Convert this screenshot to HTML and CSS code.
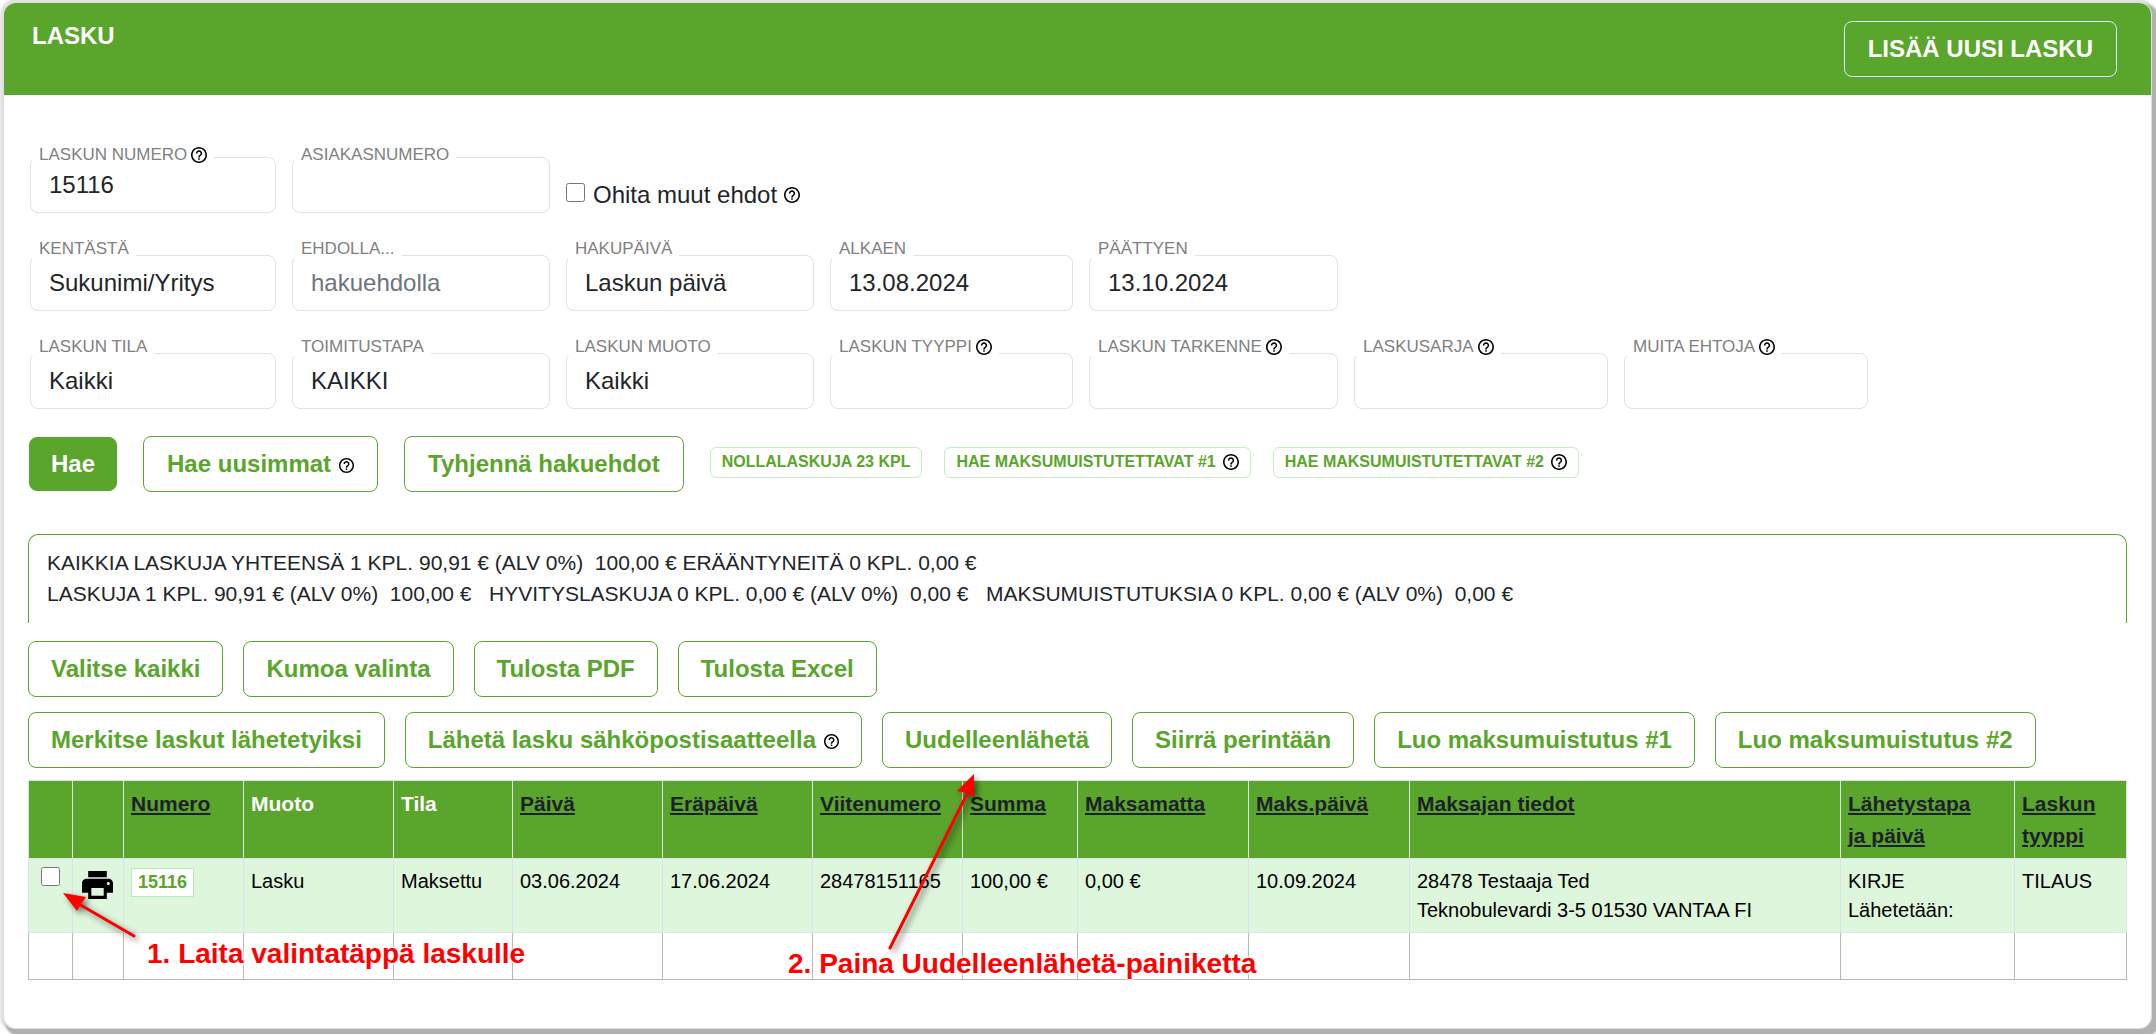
FILE: index.html
```html
<!DOCTYPE html>
<html lang="fi">
<head>
<meta charset="utf-8">
<meta name="viewport" content="width=device-width, initial-scale=1">
<title>Lasku</title>
<link rel="stylesheet" href="styles.css">
</head>
<body>
<svg class="sprite" aria-hidden="true">
  <symbol id="help" viewBox="2 2 20 20"><path d="M11 18h2v-2h-2v2zm1-16C6.480 2 2 6.480 2 12s4.480 10 10 10 10-4.480 10-10S17.520 2 12 2zm0 18c-4.410 0-8-3.590-8-8s3.590-8 8-8 8 3.590 8 8-3.590 8-8 8zm0-14c-2.210 0-4 1.790-4 4h2c0-1.100.9-2 2-2s2 .9 2 2c0 2-3 1.750-3 5h2c0-2.250 3-2.500 3-5 0-2.210-1.790-4-4-4z"/></symbol>
  <symbol id="print" viewBox="2 3 20 18"><path d="M19 8H5c-1.660 0-3 1.340-3 3v6h4v4h12v-4h4v-6c0-1.660-1.340-3-3-3zm-3 11H8v-5h8v5zm3-7c-.55 0-1-.45-1-1s.45-1 1-1 1 .45 1 1-.45 1-1 1zm-1-9H6v4h12V3z"/></symbol>
</svg>
<main class="card">
  <header class="card-header">
    <h1>LASKU</h1>
    <button type="button" class="btn btn-light">LISÄÄ UUSI LASKU</button>
  </header>
  <div class="card-body">
    <form class="search">
      <div class="fields fields-top">
        <div class="field"><label for="numero">LASKUN NUMERO <svg class="help"><use href="#help"/></svg></label><input id="numero" type="text" value="15116"></div>
        <div class="field"><label for="asiakas">ASIAKASNUMERO</label><input id="asiakas" type="text"></div>
        <div class="check"><input id="ohita" type="checkbox"><label for="ohita">Ohita muut ehdot <svg class="help"><use href="#help"/></svg></label></div>
      </div>
      <div class="fields">
        <div class="field"><label for="kentasta">KENTÄSTÄ</label><select id="kentasta"><option>Sukunimi/Yritys</option></select></div>
        <div class="field"><label for="ehdolla">EHDOLLA...</label><input id="ehdolla" type="text" placeholder="hakuehdolla"></div>
        <div class="field"><label for="hakupaiva">HAKUPÄIVÄ</label><select id="hakupaiva"><option>Laskun päivä</option></select></div>
        <div class="field"><label for="alkaen">ALKAEN</label><input id="alkaen" type="text" value="13.08.2024"></div>
        <div class="field"><label for="paattyen">PÄÄTTYEN</label><input id="paattyen" type="text" value="13.10.2024"></div>
      </div>
      <div class="fields">
        <div class="field"><label for="tila">LASKUN TILA</label><select id="tila"><option>Kaikki</option></select></div>
        <div class="field"><label for="toimitus">TOIMITUSTAPA</label><select id="toimitus"><option>KAIKKI</option></select></div>
        <div class="field"><label for="muoto">LASKUN MUOTO</label><select id="muoto"><option>Kaikki</option></select></div>
        <div class="field"><label for="tyyppi">LASKUN TYYPPI <svg class="help"><use href="#help"/></svg></label><select id="tyyppi"><option></option></select></div>
        <div class="field"><label for="tarkenne">LASKUN TARKENNE <svg class="help"><use href="#help"/></svg></label><select id="tarkenne"><option></option></select></div>
        <div class="field"><label for="sarja">LASKUSARJA <svg class="help"><use href="#help"/></svg></label><select id="sarja"><option></option></select></div>
        <div class="field"><label for="muita">MUITA EHTOJA <svg class="help"><use href="#help"/></svg></label><select id="muita"><option></option></select></div>
      </div>
      <div class="actions">
        <button type="button" class="btn btn-primary">Hae</button>
        <button type="button" class="btn">Hae uusimmat <svg class="help"><use href="#help"/></svg></button>
        <button type="button" class="btn">Tyhjennä hakuehdot</button>
        <div class="quick">
          <button type="button" class="btn-small">NOLLALASKUJA 23 KPL</button>
          <button type="button" class="btn-small">HAE MAKSUMUISTUTETTAVAT #1 <svg class="help"><use href="#help"/></svg></button>
          <button type="button" class="btn-small">HAE MAKSUMUISTUTETTAVAT #2 <svg class="help"><use href="#help"/></svg></button>
        </div>
      </div>
    </form>

    <section class="summary">
      <p>KAIKKIA LASKUJA YHTEENSÄ 1 KPL. 90,91 € (ALV 0%)&nbsp; 100,00 € ERÄÄNTYNEITÄ 0 KPL. 0,00 €</p>
      <p>LASKUJA 1 KPL. 90,91 € (ALV 0%)&nbsp; 100,00 €&nbsp;&nbsp; HYVITYSLASKUJA 0 KPL. 0,00 € (ALV 0%)&nbsp; 0,00 €&nbsp;&nbsp; MAKSUMUISTUTUKSIA 0 KPL. 0,00 € (ALV 0%)&nbsp; 0,00 €</p>
    </section>

    <div class="toolbar">
      <button type="button" class="btn">Valitse kaikki</button>
      <button type="button" class="btn">Kumoa valinta</button>
      <button type="button" class="btn">Tulosta PDF</button>
      <button type="button" class="btn">Tulosta Excel</button>
    </div>
    <div class="toolbar">
      <button type="button" class="btn">Merkitse laskut lähetetyiksi</button>
      <button type="button" class="btn">Lähetä lasku sähköpostisaatteella <svg class="help"><use href="#help"/></svg></button>
      <button type="button" class="btn">Uudelleenlähetä</button>
      <button type="button" class="btn">Siirrä perintään</button>
      <button type="button" class="btn">Luo maksumuistutus #1</button>
      <button type="button" class="btn">Luo maksumuistutus #2</button>
    </div>

    <div class="results">
      <table>
        <colgroup>
          <col class="c-check"><col class="c-print"><col class="c-number"><col class="c-date"><col class="c-state"><col class="c-date"><col class="c-date"><col class="c-date"><col class="c-sum"><col class="c-unpaid"><col class="c-paid"><col><col class="c-method"><col class="c-type">
        </colgroup>
        <thead>
          <tr>
            <th></th><th></th>
            <th><a href="#">Numero</a></th>
            <th>Muoto</th>
            <th>Tila</th>
            <th><a href="#">Päivä</a></th>
            <th><a href="#">Eräpäivä</a></th>
            <th><a href="#">Viitenumero</a></th>
            <th><a href="#">Summa</a></th>
            <th><a href="#">Maksamatta</a></th>
            <th><a href="#">Maks.päivä</a></th>
            <th><a href="#">Maksajan tiedot</a></th>
            <th><a href="#">Lähetystapa<br>ja päivä</a></th>
            <th><a href="#">Laskun<br>tyyppi</a></th>
          </tr>
        </thead>
        <tbody>
          <tr class="invoice">
            <td class="cell-check"><input type="checkbox" aria-label="Valitse lasku 15116"></td>
            <td class="cell-print"><svg class="print"><use href="#print"/></svg></td>
            <td><a class="number" href="#">15116</a></td>
            <td>Lasku</td>
            <td>Maksettu</td>
            <td>03.06.2024</td>
            <td>17.06.2024</td>
            <td>28478151165</td>
            <td>100,00 €</td>
            <td>0,00 €</td>
            <td>10.09.2024</td>
            <td>28478 Testaaja Ted<br>Teknobulevardi 3-5 01530 VANTAA FI</td>
            <td>KIRJE<br>Lähetetään:</td>
            <td>TILAUS</td>
          </tr>
          <tr class="empty"><td></td><td></td><td></td><td></td><td></td><td></td><td></td><td></td><td></td><td></td><td></td><td></td><td></td><td></td></tr>
        </tbody>
      </table>
      <svg class="arrow arrow-one" viewBox="0 0 90 60"><path class="shaft" d="M18 16L80 52"/><path class="head" d="M9 9L32 13L27 20L23 27Z"/></svg>
      <svg class="arrow arrow-two" viewBox="0 0 104 190"><path class="shaft" d="M10 182L88 26"/><path class="head" d="M94 8L94 31L87 27L77 25Z"/></svg>
      <p class="note note-one">1. Laita valintatäppä laskulle</p>
      <p class="note note-two">2. Paina Uudelleenlähetä-painiketta</p>
    </div>
  </div>
</main>
</body>
</html>
```
FILE: styles.css
```css
* { box-sizing: border-box; }
body {
  margin: 0;
  padding: 3px 5px 6px 4px;
  background: #fff;
  color: #212529;
  font-family: "Liberation Sans", Arial, sans-serif;
  font-size: 24px;
}
h1, p { margin: 0; }
button, input, select { font: inherit; margin: 0; }
.sprite { display: none; }
.help { width: 16px; height: 16px; fill: #000; flex: none; }

.card {
  background: #fff;
  border-radius: 12px;
  box-shadow: 0 0 0 1px #dedede, 5px 5px 2px 4px #b0b0b0, 0 0 3px 4px #dedede;
}
.card-header {
  display: flex;
  justify-content: space-between;
  align-items: flex-start;
  padding: 18px 34px 18px 28px;
  background: #5aa52b;
  border-radius: 12px 12px 0 0;
  color: #fff;
}
.card-header h1 { font-size: 24px; line-height: 30px; }
.card-body { padding: 49px 24px 48px; }

.btn {
  display: flex;
  align-items: center;
  gap: 8px;
  height: 56px;
  padding: 0 22px;
  border: 1px solid #5aa52b;
  border-radius: 8px;
  background: #fff;
  color: #5aa52b;
  font-weight: bold;
  white-space: nowrap;
}
.btn .help { width: 15px; height: 15px; margin-top: 2px; }
.btn-light { padding: 0 23px; background: none; border-color: #dbeafe; color: #fff; }
.btn-small {
  display: flex;
  align-items: center;
  gap: 7px;
  min-height: 31px;
  padding: 0 11px;
  border: 1px solid #c3efc3;
  border-radius: 6px;
  background: #fff;
  color: #5aa52b;
  font-size: 16px;
  font-weight: bold;
  white-space: nowrap;
}

.search { padding: 0 2px; }
.fields {
  display: grid;
  grid-template-columns: 246fr 258fr 248fr 243fr 249fr 254fr 244fr 241fr;
  column-gap: 16px;
  margin-bottom: 25px;
}
.field { display: flex; flex-direction: column; align-items: flex-start; }
.field label {
  display: flex;
  align-items: center;
  gap: 4px;
  height: 20px;
  margin: 0 0 -3px 2px;
  padding: 2px 7px 0;
  background: #fff;
  color: #808080;
  font-size: 17px;
  position: relative;
}
.fields-top .field label { margin-bottom: -7px; }
.field input, .field select {
  appearance: none;
  width: 100%;
  height: 56px;
  padding: 0 18px;
  border: 1px solid #dee2e6;
  border-radius: 8px;
  background: #fff;
  color: #212529;
}
.field select { padding-bottom: 2px; }
.field ::placeholder { color: #6c757d; opacity: 1; }
.check { display: flex; align-items: center; gap: 8px; grid-column: span 2; padding-top: 28px; }
.check label { display: flex; align-items: center; gap: 7px; padding-top: 5px; }
input[type="checkbox"] { width: 19px; height: 19px; flex: none; }

.actions { display: flex; align-items: center; gap: 26px; margin: 27px 0 42px -1px; }
.actions .btn { padding: 0 23px; }
.actions .btn-primary { height: 54px; padding: 0 21px; background: #5aa52b; color: #fff; }
.quick { display: flex; align-items: center; gap: 22px; padding-bottom: 4px; }

.summary {
  padding: 12px 18px 14px;
  border: 1px solid #5aa52b;
  border-bottom: 0;
  border-radius: 10px 10px 0 0;
  font-size: 21px;
  line-height: 31px;
}
.toolbar { display: flex; flex-wrap: wrap; gap: 20px; margin-top: 18px; }
.toolbar + .toolbar { margin-top: 15px; }

.results { position: relative; margin-top: 12px; }
table {
  width: 100%;
  table-layout: fixed;
  border-collapse: collapse;
  color: #000;
  font-size: 20px;
  line-height: 29px;
}
.c-check { width: 44px; }
.c-print { width: 51px; }
.c-number { width: 120px; }
.c-state { width: 119px; }
.c-date { width: 150px; }
.c-sum { width: 115px; }
.c-unpaid { width: 171px; }
.c-paid { width: 161px; }
.c-method { width: 174px; }
.c-type { width: 112px; }
th, td { padding: 7px; border: 1px solid #d9e3ec; text-align: left; vertical-align: top; }
th { padding-bottom: 6px; background: #5aa52b; color: #fff; font-size: 21px; line-height: 32px; }
th a { color: #1f1f2b; text-decoration-thickness: 2px; text-underline-offset: 2px; }
.invoice td { padding-top: 8px; background: #def6dc; }
.invoice .cell-check { padding-left: 12px; line-height: 0; }
.invoice .cell-print { padding: 12px 0 0 9px; line-height: 0; }
.print { width: 31px; height: 28px; }
.number {
  display: inline-block;
  padding: 0 6px;
  border: 1px solid #b5ecc0;
  background: #fff;
  color: #5aa52b;
  font-size: 18px;
  font-weight: bold;
  line-height: 27px;
  text-decoration: none;
}
.empty td { height: 47px; border-color: #d9e3ec #b8b8b8 #b8b8b8; }

.note {
  position: absolute;
  color: #f00;
  font-size: 28px;
  font-weight: bold;
  line-height: 32px;
  white-space: nowrap;
  text-shadow: 0 0 2px #fff, 0 0 2px #fff, 0 0 3px #fff, 0 0 3px #fff, 0 0 4px #fff;
}
.note-one { left: 119px; top: 158px; }
.note-two { left: 760px; top: 168px; }
.arrow { position: absolute; filter: drop-shadow(3px 3px 3px #0008); }
.arrow-one { left: 26px; top: 104px; width: 90px; height: 60px; }
.arrow-two { left: 852px; top: -14px; width: 104px; height: 190px; }
.shaft { fill: none; stroke: #f00; stroke-width: 3; stroke-linecap: round; }
.head { fill: #f00; }
```
